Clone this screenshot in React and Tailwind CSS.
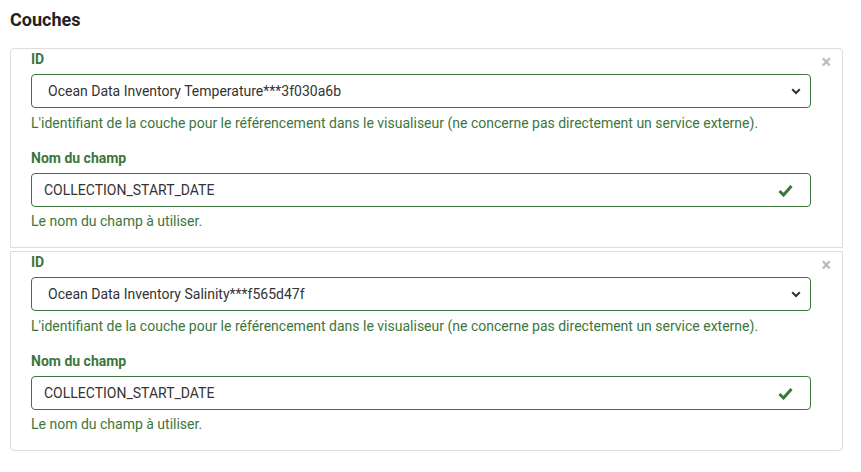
import React from "react";

function Check() {
  return (
    <svg width="15" height="13" viewBox="0 0 15 13" className="shrink-0">
      <path d="M1.5 7 L5.5 11 L13.5 2" fill="none" stroke="#3c763d" strokeWidth="3" strokeLinecap="butt" strokeLinejoin="miter" />
    </svg>
  );
}

function Chevron() {
  return (
    <svg width="10" height="7" viewBox="0 0 10 7" className="shrink-0">
      <path d="M1.2 1.2 L5 5 L8.8 1.2" fill="none" stroke="#333" strokeWidth="2" />
    </svg>
  );
}

function Card({ value, first, last }) {
  return (
    <div
      className={
        "relative border border-[#dddddd] bg-white pl-[20px] pr-[31px] pb-[16px] " +
        (first ? "rounded-t-[4px] " : "") +
        (last ? "rounded-b-[4px] " : "")
      }
    >
      <span className="absolute right-[11px] top-[3px] text-[#bbbbbb] text-[18px] leading-[20px] font-bold">×</span>
      <div className="text-[14px] leading-[20px] font-bold text-[#3c763d] mb-[5px]">ID</div>
      <div className="flex items-center justify-between h-[34px] border border-[#3c763d] rounded-[4px] pl-[16px] pr-[9px] text-[14px] text-[#333333]">
        <span>{value}</span>
        <Chevron />
      </div>
      <div className="mt-[5px] text-[14px] leading-[20px] text-[#3c763d]">
        L'identifiant de la couche pour le référencement dans le visualiseur (ne concerne pas directement un service externe).
      </div>
      <div className="mt-[15px] text-[14px] leading-[20px] font-bold text-[#3c763d] mb-[5px]">Nom du champ</div>
      <div className="flex items-center justify-between h-[34px] border border-[#3c763d] rounded-[4px] pl-[12px] pr-[17px] text-[14px] text-[#333333]">
        <span>COLLECTION_START_DATE</span>
        <Check />
      </div>
      <div className="mt-[4px] text-[14px] leading-[20px] text-[#3c763d]">Le nom du champ à utiliser.</div>
    </div>
  );
}

export default function App() {
  return (
    <div className="w-[861px] h-[472px] bg-white px-[10px] pt-[10px] pr-[18px]" style={{ fontFamily: "Roboto, 'Liberation Sans', sans-serif" }}>
      <h2 className="text-[18px] leading-[20px] font-bold text-[#222222] mb-[18px]">Couches</h2>
      <div className="flex flex-col gap-[3px]">
        <Card value="Ocean Data Inventory Temperature***3f030a6b" first />
        <Card value="Ocean Data Inventory Salinity***f565d47f" last />
      </div>
    </div>
  );
}
